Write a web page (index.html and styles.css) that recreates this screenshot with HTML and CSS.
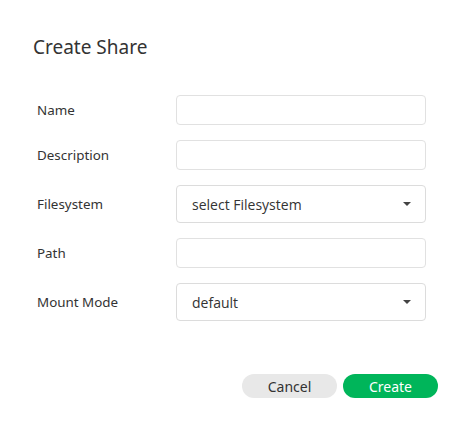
FILE: index.html
```html
<!DOCTYPE html>
<html>
<head>
<meta charset="utf-8">
<link rel="stylesheet" href="styles.css">
</head>
<body>
<div class="dialog">
  <h1 class="title">Create Share</h1>
  <form class="form">
    <label class="label">Name</label>
    <div class="input"></div>
    <label class="label">Description</label>
    <div class="input"></div>
    <label class="label">Filesystem</label>
    <div class="select"><span>select Filesystem</span><span class="caret"></span></div>
    <label class="label">Path</label>
    <div class="input"></div>
    <label class="label">Mount Mode</label>
    <div class="select"><span>default</span><span class="caret"></span></div>
  </form>
  <div class="actions">
    <button class="btn btn-cancel" type="button">Cancel</button>
    <button class="btn btn-create" type="button">Create</button>
  </div>
</div>
</body>
</html>
```
FILE: styles.css
```css
html, body {
  margin: 0;
  background: #fff;
}
.dialog {
  padding: 35px 36px 0 33px;
  font-family: "Noto Sans", "Open Sans", sans-serif;
  color: #333;
}
.title {
  margin: 0;
  font-size: 19px;
  font-weight: 400;
  line-height: 24px;
  color: #333;
}
.form {
  margin: 36px 0 0 4px;
  display: grid;
  grid-template-columns: 139px 250px;
  row-gap: 15px;
  align-items: center;
}
.label {
  font-size: 13.4px;
  color: #333;
}
.input {
  height: 30px;
  box-sizing: border-box;
  border: 1px solid #e1e1e1;
  border-radius: 4px;
}
.select {
  height: 38px;
  box-sizing: border-box;
  border: 1px solid #dcdcdc;
  border-radius: 4px;
  display: flex;
  align-items: center;
  justify-content: space-between;
  padding: 0 14px 0 15px;
  font-family: "Open Sans", sans-serif;
  font-size: 14px;
  color: #333;
}
.caret {
  width: 0;
  height: 0;
  border-left: 4px solid transparent;
  border-right: 4px solid transparent;
  border-top: 4px solid #444;
}
.actions {
  display: flex;
  justify-content: flex-end;
  gap: 6px;
  margin-top: 53px;
}
.btn {
  width: 95px;
  height: 24px;
  border: none;
  border-radius: 12px;
  font-family: "Noto Sans", sans-serif;
  font-size: 14px;
  padding: 0;
  line-height: 25px;
}
.btn-cancel {
  background: #e8e8e8;
  color: #333;
}
.btn-create {
  background: #00b55a;
  color: #fff;
}
```
